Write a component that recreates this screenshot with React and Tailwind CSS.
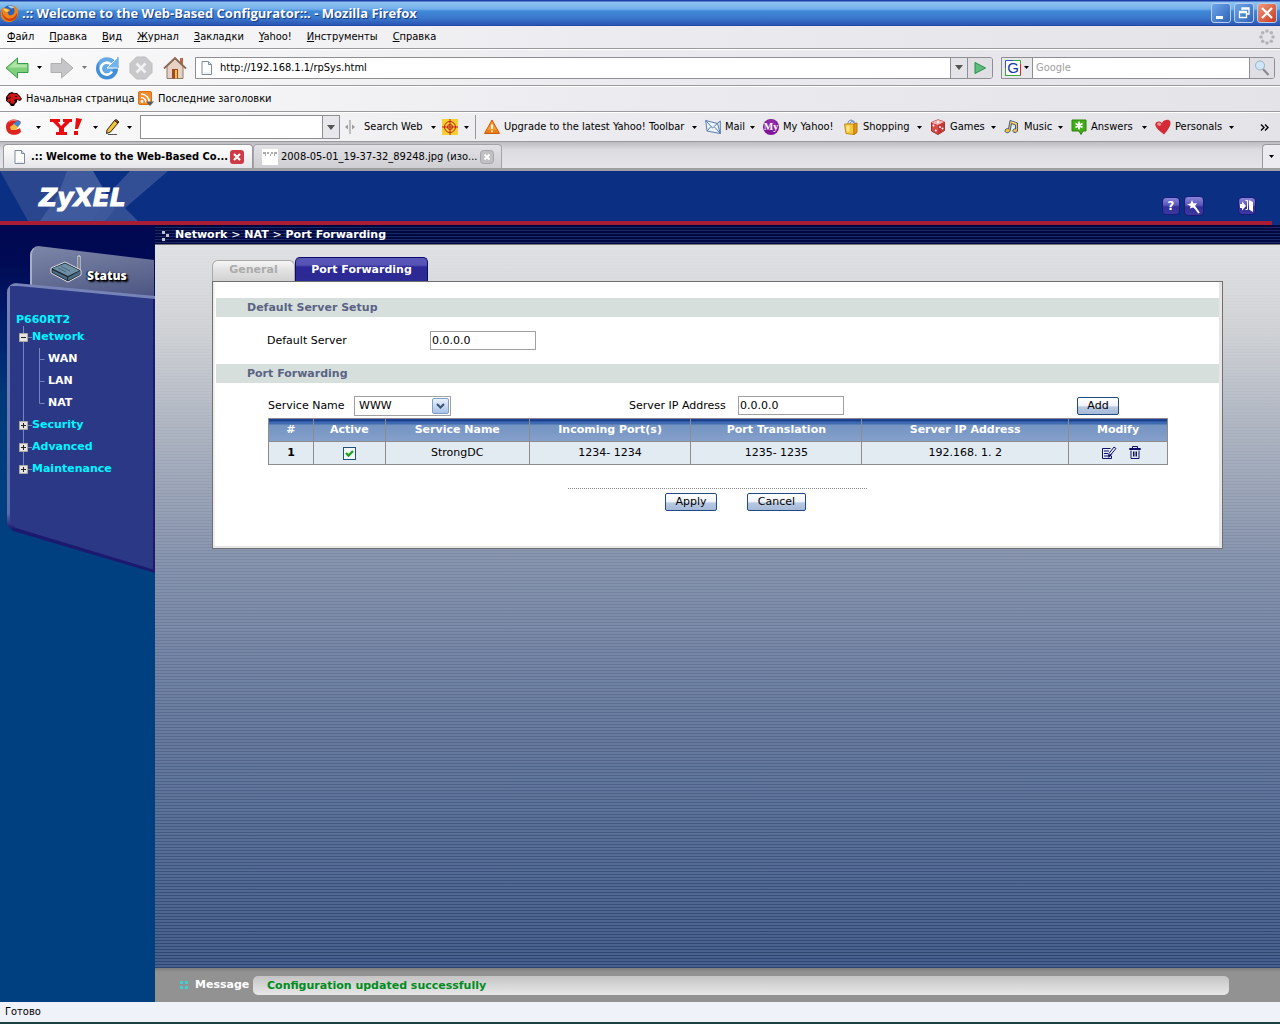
import { useState } from 'react'

const menuItems = ['Файл', 'Правка', 'Вид', 'Журнал', 'Закладки', 'Yahoo!', 'Инструменты', 'Справка']

const columns = [
  { title: '#', width: 'w-[5%]' },
  { title: 'Active', width: 'w-[8%]' },
  { title: 'Service Name', width: 'w-[16%]' },
  { title: 'Incoming Port(s)', width: 'w-[18%]' },
  { title: 'Port Translation', width: 'w-[19%]' },
  { title: 'Server IP Address', width: 'w-[23%]' },
  { title: 'Modify', width: 'w-[11%]' }
]

function Caret({ className = 'text-black' }) {
  return (
    <svg className={`w-[5px] h-[3px] shrink-0 ${className}`} viewBox="0 0 5 3" fill="currentColor" aria-hidden="true">
      <path d="M0 0h5L2.500 3z" />
    </svg>
  )
}

function Svg({ children, className = 'size-4', box = '0 0 16 16' }) {
  return (
    <svg className={`shrink-0 ${className}`} viewBox={box} fill="none" aria-hidden="true">
      {children}
    </svg>
  )
}

const FirefoxIcon = () => (
  <Svg className="size-[18px]">
    <circle cx="8" cy="8" r="7" fill="#2a62b8" />
    <path d="M6 2c3-1 6 0 7 2-2-1-3 0-4 0z" fill="#9fd0f5" />
    <path d="M1 3c1 1 3 1 4 1 2 0 3 1 3 2L6 7c0 2 1 3 3 3s3-2 3-4c0-2-1-4-2-5 4 1 6 4 5 8-1 4-4 7-8 7-5 0-8-4-7-9z" fill="#f08018" />
    <path d="M1 5c0 4 2 7 6 8 4 0 6-2 7-5 1 4-2 7-6 7S0 11 1 5z" fill="#c8400c" />
    <path d="M2 4c2 0 4 0 5 2L5 7 3 6z" fill="#ffd25a" />
  </Svg>
)

const PageIcon = () => (
  <Svg>
    <path d="M3 1.500h6.500l3 3v10H3z" fill="#fdfefe" stroke="#7f8a99" />
    <path d="M9.500 1.500v3h3" fill="#dde6ee" stroke="#7f8a99" />
    <path d="M5 13h6" stroke="#d8e2ea" />
  </Svg>
)

const WarnIcon = () => (
  <Svg>
    <path d="M8 1 15.500 14.500H.5z" fill="#f07c10" stroke="#c85a08" strokeLinejoin="round" />
    <path d="M8 2.500 3 11h10z" fill="#ffab45" opacity=".6" />
    <path d="M8 5.500v4.500M8 11.500v1.800" stroke="#fff" strokeWidth="1.800" />
  </Svg>
)

const MailIcon = () => (
  <Svg>
    <path d="M.7 1.500 12.500 4.500l2.800 10L2 12z" fill="#eaf4fd" stroke="#5a7cae" />
    <path d="M.7 1.500 7.500 9l7-6.500M2 12l4-4.500M15.300 14.500 9.500 8" stroke="#5a7cae" />
    <path d="M15.300 14.500V2l-3 2.500" stroke="#5a7cae" />
  </Svg>
)

const MyIcon = () => (
  <Svg>
    <circle cx="8" cy="8" r="8" fill="#7f169a" />
    <circle cx="8" cy="6" r="5.500" fill="#a53cc0" opacity=".5" />
    <text x="8" y="11" textAnchor="middle" fontSize="10" fontWeight="700" fill="#fff" fontFamily="'Liberation Serif', serif">My</text>
  </Svg>
)

const BagIcon = () => (
  <Svg>
    <path d="M5 5c0-5 5-5 5.500-1M7 5c1-4 5-4 5 0" stroke="#5a86b8" />
    <path d="M1.500 5h9.500v10.500l-8-1z" fill="#f8c63a" stroke="#c88810" />
    <path d="M11 5l3-1v9.500l-3 2z" fill="#e09a18" stroke="#b8780c" />
    <path d="M3.500 6.500h3v6h-3z" fill="#ffe68a" />
  </Svg>
)

const DiceIcon = () => (
  <Svg>
    <path d="M8 .8 14.500 3v8.500L8 15.500 1.500 12V3.500z" fill="#d84a4a" stroke="#933" />
    <path d="M8 .8 14.500 3 8 6 1.500 3.500z" fill="#f6b4b4" />
    <path d="M8 6l6.500-3v8.500L8 15.500z" fill="#c43636" />
    <circle cx="8" cy="3.300" r="1" fill="#fff" />
    <circle cx="3.500" cy="6.500" r="1" fill="#fff" />
    <circle cx="5.800" cy="11.500" r="1" fill="#fff" />
    <circle cx="10" cy="8" r="1" fill="#fff" />
    <circle cx="12.500" cy="9.500" r="1" fill="#fff" />
  </Svg>
)

const MusicIcon = () => (
  <Svg>
    <path d="M6 1.500 13.500 4v8c-1 2-4 2-4.500.5S10 9.500 11.500 10V6L7.500 4.500 6 12c-1 2.500-5 2-5 0s2-3 3.500-2z" fill="#f8c428" stroke="#3e5a94" strokeLinejoin="round" />
    <path d="M7.500 3 12 4.500" stroke="#ffe27a" />
  </Svg>
)

const AnswersIcon = () => (
  <Svg>
    <path d="M1 1h14v11h-3l-2 3.500L8 12H1z" fill="#3fae18" stroke="#2b8508" strokeLinejoin="round" />
    <path d="M8 2.500v8M4.500 4.500l7 4M11.500 4.500l-7 4" stroke="#fff" strokeWidth="1.800" />
  </Svg>
)

const HeartIcon = () => (
  <Svg>
    <path d="M9 15.500C4 12 0 8.500.3 5 .7 2 5 1.500 7 4c1.500-3 7-4.500 8.300-1.500C16.500 7 12 12 9 15.500z" fill="#d42c36" />
    <path d="M2 5c.5-2 3-2 4-.5S4 9 2 5z" fill="#f58a8e" />
  </Svg>
)

const yahooLinks = [
  { label: 'Upgrade to the latest Yahoo! Toolbar', Icon: WarnIcon, width: 'w-[221px]', caret: true },
  { label: 'Mail', Icon: MailIcon, width: 'w-[58px]', caret: true },
  { label: 'My Yahoo!', Icon: MyIcon, width: 'w-[80px]', caret: false },
  { label: 'Shopping', Icon: BagIcon, width: 'w-[87px]', caret: true },
  { label: 'Games', Icon: DiceIcon, width: 'w-[74px]', caret: true },
  { label: 'Music', Icon: MusicIcon, width: 'w-[67px]', caret: true },
  { label: 'Answers', Icon: AnswersIcon, width: 'w-[84px]', caret: true },
  { label: 'Personals', Icon: HeartIcon, width: 'w-[87px]', caret: true }
]

function TitleBar() {
  const btn = 'size-[20px] rounded-[3px] border border-[#b9cdf0] flex items-center justify-center'
  return (
    <header className="h-[26px] flex items-center pl-[1px] pr-[3px] bg-[linear-gradient(#1b3fa6_0px,#1b3fa6_1px,#8fc4f0_2px,#72b0ea_9px,#4188d8_11px,#3a78cc_18px,#2a55b4_25px,#1b3a98_26px)]">
      <FirefoxIcon />
      <h1 className="ml-[3px] flex-1 whitespace-nowrap font-['Open_Sans',sans-serif] font-bold text-[13px] leading-[16px] text-white [text-shadow:1px_1px_0_#1a3a80]">
        .:: Welcome to the Web-Based Configurator::. - Mozilla Firefox
      </h1>
      <div className="flex gap-[3px]">
        <button aria-label="Minimize" className={`${btn} bg-[linear-gradient(135deg,#6ea6e8,#2f62b8)]`}>
          <Svg className="size-[14px]" box="0 0 14 14"><path d="M2 10h7v3H2z" fill="#fff" /></Svg>
        </button>
        <button aria-label="Restore" className={`${btn} bg-[linear-gradient(135deg,#6ea6e8,#2f62b8)]`}>
          <Svg className="size-[14px]" box="0 0 14 14"><path d="M5 4V2h7v6h-2M5 3h7M2.500 5.500h7v6h-7zM2 6.500h8" stroke="#fff" strokeWidth="1.300" /></Svg>
        </button>
        <button aria-label="Close" className={`${btn} bg-[linear-gradient(135deg,#f09a80,#c83a1c)]`}>
          <Svg className="size-[14px]" box="0 0 14 14"><path d="m2 2 10 10M12 2 2 12" stroke="#fff" strokeWidth="2.200" /></Svg>
        </button>
      </div>
    </header>
  )
}

function MenuBar() {
  return (
    <nav className="h-[23px] flex items-center pl-[7px] pr-[5px] border-b border-[#9a9a9e]">
      <ul className="flex gap-[15px] flex-1">
        {menuItems.map((item) => (
          <li key={item}>
            <button><span className="underline">{item[0]}</span>{item.slice(1)}</button>
          </li>
        ))}
      </ul>
      <svg className="size-[16px] text-[#b4b4b8]" viewBox="0 0 16 16" fill="currentColor" aria-hidden="true">
        <circle cx="8" cy="2" r="1.800" /><circle cx="12.300" cy="3.700" r="1.800" /><circle cx="14" cy="8" r="1.800" /><circle cx="12.300" cy="12.300" r="1.800" />
        <circle cx="8" cy="14" r="1.800" /><circle cx="3.700" cy="12.300" r="1.800" /><circle cx="2" cy="8" r="1.800" /><circle cx="3.700" cy="3.700" r="1.800" />
      </svg>
    </nav>
  )
}

function NavBar() {
  const [url, setUrl] = useState('http://192.168.1.1/rpSys.html')
  const [query, setQuery] = useState('')
  return (
    <div className="h-[37px] flex items-center pl-[5px] pr-[5px] border-t border-t-white border-b border-b-[#9a9a9e]">
      <button aria-label="Back" className="flex items-center w-[45px]">
        <Svg className="size-[24px]" box="0 0 24 24">
          <path d="M1 12 12.500 2v5.500H23v9H12.500V22z" fill="#7fd07a" stroke="#3b9a50" strokeLinejoin="round" />
          <path d="M3.500 11.500 11.500 4.500v4H22v3z" fill="#c4efb8" opacity=".7" />
        </Svg>
        <span className="ml-[8px]"><Caret /></span>
      </button>
      <button aria-label="Forward" className="flex items-center w-[44px]">
        <Svg className="size-[24px]" box="0 0 24 24">
          <path d="M23 12 11.500 2v5.500H1v9h10.500V22z" fill="#c6c6c8" stroke="#b0b0b3" strokeLinejoin="round" />
        </Svg>
        <span className="ml-[8px]"><Caret className="text-[#777]" /></span>
      </button>
      <button aria-label="Reload" className="w-[35px] pl-[1px]">
        <Svg className="size-[24px]" box="0 0 24 24">
          <circle cx="12" cy="12.500" r="11" fill="#3f8fd8" />
          <circle cx="11.500" cy="9" r="8" fill="#7fbdf0" opacity=".6" />
          <path d="M17 15.500A6 6 0 1 1 15.500 8" stroke="#fff" strokeWidth="2.600" />
          <path d="M12 12h11V1z" fill="#6fb4ec" stroke="#fff" />
          <path d="M23 12V1" stroke="#3f8fd8" />
        </Svg>
      </button>
      <button aria-label="Stop" className="w-[34px]">
        <Svg className="size-[24px]" box="0 0 24 24">
          <path d="M7.500 1h9L23 7.500v9L16.500 23h-9L1 16.500v-9z" fill="#c9c9cb" stroke="#bcbcbf" strokeLinejoin="round" />
          <path d="m7.500 7.500 9 9M16.500 7.500l-9 9" stroke="#f2f2f4" strokeWidth="2.600" />
        </Svg>
      </button>
      <button aria-label="Home" className="w-[32px]">
        <Svg className="size-[24px]" box="0 0 24 24">
          <path d="M17 2h3v7h-3z" fill="#b56a4c" />
          <path d="M4 10 12 3l8 7v12.500H4z" fill="#e6d2c2" stroke="#8f7a6c" />
          <path d="M1 12.500 12 2l11 10.500" stroke="#8c6a58" strokeWidth="1.800" />
          <path d="M9 13h6v9.500H9z" fill="#a8452c" />
          <path d="M12 14h2v8.500h-2z" fill="#e8c83c" />
        </Svg>
      </button>
      <div className="flex flex-1 h-[22px] border border-[#8e8e93] rounded-r-[3px] bg-white overflow-hidden">
        <div className="w-[22px] flex items-center justify-center"><PageIcon /></div>
        <input aria-label="Address" value={url} onChange={(e) => setUrl(e.target.value)} className="flex-1 min-w-0 pl-[2px] outline-none" />
        <button aria-label="History" className="w-[17px] border-l border-[#8e8e93] bg-[#e4e3e8] flex items-center justify-center">
          <svg className="w-[8px] h-[5px]" viewBox="0 0 8 5" aria-hidden="true"><path d="M0 0h8L4 5z" fill="#555" /></svg>
        </button>
        <button aria-label="Go" className="w-[25px] border-l border-[#8e8e93] bg-[#e0dfe4] flex items-center justify-center">
          <svg className="size-[12px]" viewBox="0 0 12 12" aria-hidden="true"><path d="M1 .5 11.500 6 1 11.500z" fill="#5cbf7c" stroke="#2a8a4c" /></svg>
        </button>
      </div>
      <div className="ml-[8px] flex w-[274px] h-[22px] border border-[#8e8e93] rounded-r-[3px] bg-white overflow-hidden">
        <button aria-label="Search engine" className="w-[31px] shrink-0 pl-[3px] flex items-center gap-[3px] bg-[#e8e7ec] border-r border-[#8e8e93]">
          <Svg>
            <path d="M1 1h14v14H1z" fill="#fff" />
            <path d="M.5 15.500V.5H8" stroke="#2a56d0" />
            <path d="M8 .5h7.500V4M.5 8v7.500h15" stroke="#38a838" />
            <path d="M15.500 4v11.500" stroke="#d82828" />
            <text x="8" y="13" textAnchor="middle" fontSize="15" fill="#1434a8" fontFamily="'Liberation Sans', sans-serif">G</text>
          </Svg>
          <Caret />
        </button>
        <input aria-label="Search" placeholder="Google" value={query} onChange={(e) => setQuery(e.target.value)} className="flex-1 min-w-0 pl-[3px] outline-none placeholder:text-[#a0a0a0]" />
        <button aria-label="Start search" className="w-[25px] shrink-0 border-l border-[#8e8e93] bg-[#e0dfe4] flex items-center justify-center">
          <Svg>
            <path d="m9 9 5.500 6" stroke="#8a8a90" strokeWidth="2.200" />
            <circle cx="6" cy="5.500" r="4.500" fill="#cfe6f8" stroke="#9ab0c0" />
          </Svg>
        </button>
      </div>
    </div>
  )
}

function BookmarksBar() {
  return (
    <div className="h-[26px] flex items-center pl-[6px] border-t border-t-white border-b border-b-[#9a9a9e]">
      <a href="#start" className="flex items-center gap-[4px] w-[132px] whitespace-nowrap">
        <Svg>
          <path d="M0 6 3 2l3-1 2 1h3l3 3 2 3-2 2-3-1v2l-2 2-1 2H5l-2-3-3-2z" fill="#180404" />
          <path d="M1 6l3-3 3-.5L11 3l3 3 1 2-2 1-3-1-2 1 1 2-2 2-3-1 1-2-3 1-1-2 2-2z" fill="#d01818" />
          <path d="M9 5h2v1H9zM4 5l1 2-2 1zM7 8l-1 2z" fill="#200" />
        </Svg>
        Начальная страница
      </a>
      <button className="flex items-center gap-[4px] whitespace-nowrap">
        <Svg>
          <rect x=".5" y=".5" width="13" height="13" rx="1.500" fill="#f08a2c" stroke="#d8701c" />
          <path d="M3 6.500a5 5 0 0 1 5 5M3 3a8.500 8.500 0 0 1 8.500 8.500" stroke="#fff" strokeWidth="1.600" />
          <circle cx="4" cy="10.500" r="1.400" fill="#fff" />
          <path d="M8 10.500h8L12 15z" fill="#5c5c60" />
        </Svg>
        Последние заголовки
      </button>
    </div>
  )
}

function YahooBar() {
  return (
    <div className="h-[30px] flex items-center pl-[6px] pr-[11px] border-t border-t-white border-b border-b-[#9a9a9e]">
      <button aria-label="CCleaner" className="w-[44px] flex items-center justify-between pr-[9px]">
        <Svg>
          <path d="M15 3C11-1 0-.5 0 8s10 10 15 5l-1-4c-2 2-6 2-7-1s2-4 6-3z" fill="#dc2420" />
          <path d="M3 3c2-2 6-2 8-1" stroke="#f4827c" />
          <path d="M7 5 12 1l3 3-3 4H8z" fill="#3f86d0" />
          <path d="M4 8l4-3 4 3-2 3H5z" fill="#f2b840" />
        </Svg>
        <Caret />
      </button>
      <button aria-label="Yahoo!" className="w-[55px] flex items-center justify-between pr-[7px]">
        <Svg className="w-[32px] h-[18px]" box="0 0 32 18">
          <path d="M0 1h10v3H8l3 4 4-4h-2V1h9v3h-2l-6 6v4h3v3H6v-3h3v-4L3 4H0z" fill="#e80c10" />
          <path d="m26 0 6 1-4 10h-3zM24 13h4v4h-4z" fill="#e80c10" />
        </Svg>
        <Caret />
      </button>
      <button aria-label="Highlight" className="w-[35px] flex items-center justify-between pr-[8px]">
        <Svg>
          <path d="m2 11 7.500-9.500L13 4l-7.500 9-4 1.500z" fill="#f7c437" stroke="#2a2418" />
          <path d="m9.500 1.500 1.500-1L14 3l-1 1z" fill="#e04838" stroke="#2a2418" />
          <path d="M3 15.500h9" stroke="#555" />
        </Svg>
        <Caret />
      </button>
      <div className="flex w-[200px] h-[24px] border border-[#8e8e93] bg-white">
        <input aria-label="Yahoo search" className="flex-1 min-w-0 px-1 outline-none" />
        <button aria-label="Search history" className="w-[17px] border-l border-[#8e8e93] bg-[#e8e7eb] flex items-center justify-center">
          <svg className="w-[8px] h-[5px]" viewBox="0 0 8 5" aria-hidden="true"><path d="M0 0h8L4 5z" fill="#555" /></svg>
        </button>
      </div>
      <Svg className="w-[10px] h-[14px] ml-[5px]" box="0 0 10 14">
        <path d="M5 0v14" stroke="#8a8a8e" />
        <path d="M0 7l3-2.500v5zM10 7 7 4.500v5z" fill="#9a9a9e" />
      </Svg>
      <button className="ml-[9px] w-[78px] flex items-center justify-between pr-[6px] whitespace-nowrap">Search Web<Caret /></button>
      <button aria-label="Anti-Spy" className="w-[33px] flex items-center gap-[6px]">
        <Svg>
          <path d="M0 0h16v16H0z" fill="#f8cf30" />
          <circle cx="8" cy="8" r="5.500" stroke="#c02020" /><circle cx="8" cy="8" r="2.500" stroke="#c02020" />
          <path d="M8 0v16M0 8h16" stroke="#c02020" />
        </Svg>
        <Caret />
      </button>
      <div className="h-[24px] w-[1px] bg-[#9a9a9e] mr-[8px]" />
      {yahooLinks.map(({ label, Icon, width, caret }) => (
        <button key={label} className={`flex items-center shrink-0 whitespace-nowrap pr-[8px] ${width}`}>
          <Icon />
          <span className="ml-[4px] mr-auto">{label}</span>
          {caret && <Caret />}
        </button>
      ))}
      <button aria-label="More" className="ml-auto">
        <Svg className="w-[9px] h-[7px]" box="0 0 9 7"><path d="m1 .5 3 3-3 3M5 .5l3 3-3 3" stroke="#000" strokeWidth="1.400" /></Svg>
      </button>
    </div>
  )
}

function TabBar() {
  return (
    <div className="h-[29px] shrink-0 flex items-end pl-[3px] bg-[linear-gradient(#bdbcc0,#dddce1_8px,#e4e3e8)] border-b-[3px] border-[#a0a0a4]">
      <button className="h-[24px] w-[250px] pl-[8px] pr-[8px] flex items-center rounded-t-[4px] border border-b-0 border-[#9a9a9e] bg-[linear-gradient(#ffffff,#e6e6ea)] font-bold whitespace-nowrap">
        <PageIcon />
        <span className="ml-[3px] mr-auto">.:: Welcome to the Web-Based Co...</span>
        <Svg className="size-[14px]" box="0 0 14 14">
          <rect width="14" height="14" rx="3" fill="#cf3a46" />
          <path d="m4 4 6 6M10 4l-6 6" stroke="#fff" strokeWidth="2.200" />
        </Svg>
      </button>
      <button className="h-[24px] w-[249px] pl-[8px] pr-[7px] flex items-center rounded-t-[4px] border border-b-0 border-[#a4a4a8] bg-[linear-gradient(#e2e1e5,#cfced3)] whitespace-nowrap">
        <Svg>
          <path d="M0 0h16v16H0z" fill="#fff" />
          <path d="M1 4h3M5 4h2M9 4h2M12 4h3M3 6h1M8 6h1M12 6h1" stroke="#555" />
        </Svg>
        <span className="ml-[3px] mr-auto">2008-05-01_19-37-32_89248.jpg (изо...</span>
        <Svg className="size-[14px]" box="0 0 14 14">
          <rect x=".5" y=".5" width="13" height="13" rx="3" fill="#c0bfc3" stroke="#a6a6aa" />
          <path d="m4.500 4.500 5 5M9.500 4.500l-5 5" stroke="#fff" strokeWidth="2" />
        </Svg>
      </button>
      <button aria-label="List all tabs" className="ml-auto h-[24px] w-[18px] flex items-center justify-center rounded-tl-[4px] border border-b-0 border-r-0 border-[#9a9a9e] bg-[#ececf0]">
        <Caret />
      </button>
    </div>
  )
}

function Banner() {
  const btn = 'rounded-[4px] border border-[#1a1a78] bg-[linear-gradient(#8a86dc,#5a56b8_45%,#34309c_55%,#3c389e)] flex items-center justify-center'
  return (
    <div className="relative bg-[#0b2f83]">
      <svg className="absolute left-0 top-0 w-[170px] h-[50px]" viewBox="0 0 170 50" aria-hidden="true">
        <path d="M0 0h93l22 38-10 12H28z" fill="#29468f" />
        <path d="M67 0h26l22 38-10 12H40l18-26z" fill="#405b9d" />
        <path d="M130 0h38l-43 37 13 13H92l23-34z" fill="#3c579b" opacity=".8" />
      </svg>
      <div className="relative h-[50px] flex items-center pl-[39px] pr-[24px]">
        <span className="flex-1 pt-[3px] font-['DejaVu_Sans',sans-serif] font-bold italic text-[25px] leading-[30px] text-white [-webkit-text-stroke:1px_#fff]">ZyXEL</span>
        <div className="flex items-center pt-[19px]">
          <button aria-label="Help" className={`${btn} size-[18px] text-white font-bold text-[13px]`}>?</button>
          <button aria-label="Wizard" className={`${btn} ml-[4px] size-[20px]`}>
            <Svg>
              <path d="m6 2 1.500 3.500 3.500-.5-2 3 1 3.500L7 9.500l-3 1L4.500 8 1 6.500l3.500-1z" fill="#fff" />
              <path d="m8 8 5 7" stroke="#fff" strokeWidth="2" />
            </Svg>
          </button>
          <button aria-label="Logout" className={`${btn} ml-[34px] size-[18px]`}>
            <Svg className="size-[14px]" box="0 0 14 14">
              <path d="M0 5h2V2.500L6 7l-4 4.500V9H0z" fill="#fff" />
              <path d="M5.500 1.500h2v9h-2" stroke="#fff" /><path d="m9 1 4 2v10l-4-2.500z" fill="#fff" />
            </Svg>
          </button>
        </div>
      </div>
      <div className="h-[4px] mr-[8px] bg-[#a81c34]" />
    </div>
  )
}

function TreeNode({ label, open, children }) {
  return (
    <li>
      <a href={`#${label.toLowerCase()}`} className="h-[22px] flex items-center font-bold text-[#00f6ff]">
        <svg className="w-[13px] h-[22px] shrink-0" viewBox="0 0 13 22" aria-hidden="true">
          <path d={label === 'Maintenance' ? 'M4.500 0v7' : 'M4.500 0v22'} stroke="#7686bb" />
          <path d="M9 11.500h4" stroke="#7686bb" />
          <path d="M.5 7.500h8v8h-8z" fill="#e6e4dc" stroke="#a8a8a8" />
          <path d={open ? 'M2 11.500h5' : 'M2 11.500h5M4.500 9v5'} stroke="#222" />
        </svg>
        {label}
      </a>
      {children}
    </li>
  )
}

function Sidebar() {
  return (
    <aside className="w-[155px] shrink-0 bg-[linear-gradient(#000850_0px,#000b55_40px,#001f6c_100px,#003878_170px,#003f80_260px)] pt-[21px] font-['DejaVu_Sans',sans-serif]">
      <a href="#status" className="ml-[30px] mr-[1px] h-[50px] block rounded-tl-[9px] border-l-2 border-[#a7aec6] bg-[linear-gradient(170deg,#7c86a8,#656f95_50%,#4c5582)] [clip-path:polygon(0_0,8px_0,100%_14px,100%_100%,0_100%)]">
        <span className="flex items-end h-full pl-[18px] pb-[13px] gap-[3px] text-white">
          <Svg className="w-[34px] h-[28px]" box="0 0 34 28">
            <path d="M28 16V1h2v17" fill="#222" stroke="#e8ecf2" />
            <path d="M1 13 15 7l16 8v5l-13 7L1 18z" fill="#1c2630" stroke="#dfe5ec" />
            <path d="m2.500 13.500 12.500-5 14.500 7L18 21z" fill="#6f8fa6" />
            <path d="M18 22.500 30 16v3.500L18 25.500zM2.500 15 17 22v3L2.500 17.500z" fill="#4c6a82" />
            <path d="m8 13 8 4M11 11.500l9 4.500" stroke="#4a667c" />
          </Svg>
          <span className="font-['Open_Sans',sans-serif] font-extrabold text-[12px] leading-[14px] [text-shadow:1px_1px_1px_#000,-1px_0_1px_#000,2px_2px_2px_#000]">Status</span>
        </span>
      </a>
      <div className="relative -mt-[13px] ml-[7px] bg-[linear-gradient(#7784b8,#5f6cab_calc(100%-60px),#1c1a70_calc(100%-44px))] rounded-l-[9px] [clip-path:polygon(0_0,8px_0,100%_13px,100%_100%,6px_calc(100%-42px),0_calc(100%-48px))]">
        <div className="ml-[3px] bg-[#2b3885] border-r-2 border-[#1c1a70] rounded-bl-[9px] [clip-path:polygon(0_3px,8px_3px,100%_16px,100%_calc(100%-3px),6px_calc(100%-45px),0_calc(100%-51px))]">
          <nav className="pt-[29px] pl-[6px] pb-[93px]">
            <h2 className="font-bold text-[#00f6ff] leading-[16px]">P660RT2</h2>
            <ul className="pl-[3px] -mt-[2px]">
              <TreeNode label="Network" open>
                <ul className="ml-[5px]">
                  {['WAN', 'LAN', 'NAT'].map((name) => (
                    <li key={name}>
                      <a href={`#${name.toLowerCase()}`} className="h-[22px] flex items-center font-bold text-white">
                        <svg className="w-[24px] h-[22px] shrink-0 overflow-visible" viewBox="0 0 24 22" aria-hidden="true">
                          <path d="M-.5 0v22" stroke="#7686bb" />
                          <path d={name === 'NAT' ? 'M15.500 0v11.500h5' : 'M15.500 0v22M15.500 11.500h5'} fill="none" stroke="#7686bb" />
                        </svg>
                        {name}
                      </a>
                    </li>
                  ))}
                </ul>
              </TreeNode>
              <TreeNode label="Security" />
              <TreeNode label="Advanced" />
              <TreeNode label="Maintenance" />
            </ul>
          </nav>
        </div>
      </div>
    </aside>
  )
}

function SectionTitle({ children }) {
  return <h2 className="h-[19px] leading-[19px] pl-[31px] bg-[#d7dfdd] text-[#5a6384] font-bold">{children}</h2>
}

const xpButton = 'h-[18px] leading-[16px] rounded-[2px] border border-[#1f4a86] bg-[linear-gradient(#ffffff,#eef2f8_50%,#b9c9e2_55%,#a5b9d8)]'
const field = 'w-[106px] h-[19px] border border-[#a0a0a0] px-[1px] bg-white outline-none'

function PortForwarding() {
  const [active, setActive] = useState(true)
  const [defaultServer, setDefaultServer] = useState('0.0.0.0')
  const [serverIp, setServerIp] = useState('0.0.0.0')
  const cell = 'border border-[#8c8c8c]'

  return (
    <div className="mx-[57px] pt-[12px]">
      <div className="flex items-end" role="tablist">
        <button role="tab" aria-selected="false" className="w-[83px] h-[21px] pb-[3px] rounded-t-[6px] border border-b-0 border-[#a9a9a9] bg-[linear-gradient(#f6f6f6,#e4e4e4_40%,#d2d2d2)] text-[#ababab] font-bold">General</button>
        <button role="tab" aria-selected="true" className="w-[133px] h-[24px] rounded-t-[5px] border border-b-0 border-[#0b0870] bg-[linear-gradient(#5a58b8,#5552b4_7px,#2c2896_9px,#2c2a94)] text-white font-bold">Port Forwarding</button>
      </div>
      <form onSubmit={(e) => e.preventDefault()} className="border border-[#707070] bg-white shadow-[inset_-3px_-2px_0_#e6e6e6,inset_2px_0_0_#eeeeee] pl-[3px] pr-[3px] pt-[16px] pb-[37px]">
        <SectionTitle>Default Server Setup</SectionTitle>
        <div className="h-[47px] flex items-center pl-[51px]">
          <label htmlFor="default-server" className="w-[163px]">Default Server</label>
          <input id="default-server" value={defaultServer} onChange={(e) => setDefaultServer(e.target.value)} className={field} />
        </div>
        <SectionTitle>Port Forwarding</SectionTitle>
        <div className="pl-[52px] pr-[51px]">
          <div className="h-[35px] pt-[10px] flex items-center pr-[49px]">
            <div className="flex items-center w-[361px]">
              <label htmlFor="service" className="w-[86px] whitespace-nowrap">Service Name</label>
              <div className="relative w-[97px] h-[20px]">
                <select id="service" defaultValue="WWW" className="appearance-none w-full h-full pl-[4px] border border-[#a0a0a0] bg-white">
                  <option>WWW</option>
                  <option>FTP</option>
                  <option>Telnet</option>
                </select>
                <span className="pointer-events-none absolute right-[2px] top-[2px] w-[17px] h-[16px] rounded-[2px] border border-[#7f9fc8] bg-[linear-gradient(#e8f0fc,#a9c2e8)] flex items-center justify-center">
                  <svg className="w-[9px] h-[6px]" viewBox="0 0 9 6" fill="none" aria-hidden="true"><path d="m1 1 3.500 3.500L8 1" stroke="#3c5470" strokeWidth="2" /></svg>
                </span>
              </div>
            </div>
            <label htmlFor="server-ip" className="w-[109px] whitespace-nowrap">Server IP Address</label>
            <input id="server-ip" value={serverIp} onChange={(e) => setServerIp(e.target.value)} className={field} />
            <button className={`${xpButton} ml-auto w-[42px]`}>Add</button>
          </div>
          <table className="w-full table-fixed border-collapse border border-[#8c8c8c] text-center">
            <thead>
              <tr className="h-[23px] bg-[linear-gradient(#1a3f94_0px,#1a3f94_2px,#3f6cb0_3px,#3f6cb0_5px,#7494c2_6px,#86a0cb_100%)] text-white">
                {columns.map((col) => (
                  <th key={col.title} scope="col" className={`${cell} ${col.width} font-bold`}>{col.title}</th>
                ))}
              </tr>
            </thead>
            <tbody>
              <tr className="h-[23px] bg-[#e2eaf2]">
                <th scope="row" className={`${cell} font-bold`}>1</th>
                <td className={cell}>
                  <span className="relative block mx-auto size-[13px]">
                    <input type="checkbox" aria-label="Active" checked={active} onChange={() => setActive(!active)} className="appearance-none block size-[13px] border border-[#1c5180] bg-[#f4f8f6]" />
                    {active && (
                      <svg className="pointer-events-none absolute inset-0 size-[13px]" viewBox="0 0 13 13" fill="none" aria-hidden="true">
                        <path d="m3 6 2.500 2.500L10 4" stroke="#21a121" strokeWidth="2.400" />
                      </svg>
                    )}
                  </span>
                </td>
                <td className={cell}>StrongDC</td>
                <td className={cell}>1234- 1234</td>
                <td className={cell}>1235- 1235</td>
                <td className={cell}>192.168. 1. 2</td>
                <td className={cell}>
                  <div className="flex items-center justify-center gap-[10px] pl-[7px]">
                    <button aria-label="Edit">
                      <Svg className="size-[16px] text-[#10106a]">
                        <path d="M9.500 3.500h-8v10h9V11M3 6h5M3 8.500h4M3 11h4" stroke="currentColor" />
                        <path d="m7.500 11.500.5-3 5-6.500L15 3.500 9.500 10z" fill="#e2eaf2" stroke="currentColor" />
                        <path d="M7.500 9.500h4L7.500 13z" fill="currentColor" />
                      </Svg>
                    </button>
                    <button aria-label="Delete">
                      <Svg className="size-[16px] text-[#10106a]">
                        <path d="M5.500 3V1.500h5V3M2.500 3.500h11v1h-11zM4 5.500v8h8v-8M6.500 6.500v5M8 6.500v5M9.500 6.500v5" stroke="currentColor" />
                      </Svg>
                    </button>
                  </div>
                </td>
              </tr>
            </tbody>
          </table>
        </div>
        <div className="w-[299px] mx-auto mt-[23px] border-t border-dotted border-[#8a8a8a]" />
        <div className="flex justify-center gap-[30px] mt-[4px] pl-[36px]">
          <button className={`${xpButton} w-[52px]`}>Apply</button>
          <button className={`${xpButton} w-[59px]`}>Cancel</button>
        </div>
      </form>
    </div>
  )
}

export default function App() {
  return (
    <div className="min-h-screen flex flex-col text-[11px] leading-[14px] text-black font-['DejaVu_Sans_Condensed','DejaVu_Sans',sans-serif]">
      <TitleBar />
      <div className="bg-[linear-gradient(to_right,#fafafa,#ecebef_45%,#e4e3e8)]">
        <MenuBar />
        <NavBar />
        <BookmarksBar />
        <YahooBar />
      </div>
      <TabBar />
      <Banner />
      <div className="flex-1 flex">
        <Sidebar />
        <div className="flex-1 min-w-0 flex flex-col font-['DejaVu_Sans',sans-serif]">
          <div className="h-[20px] flex items-center gap-[5px] pl-[7px] text-white font-bold border-b border-[#777] bg-[repeating-linear-gradient(#00093f_0px,#00093f_2px,#1a2a66_2px,#1a2a66_3px)]">
            <svg className="w-[8px] h-[10px] mt-[2px]" viewBox="0 0 8 10" fill="#c0c4cc" aria-hidden="true"><path d="M0 0h3v3H0zM4 3h3v3H4zM0 7h3v3H0z" /></svg>
            <p>Network <span className="font-normal">&gt;</span> NAT <span className="font-normal">&gt;</span> Port Forwarding</p>
          </div>
          {/* the fade on top lets the scan lines show more towards the bottom */}
          <main className="flex-1 bg-[linear-gradient(#e8e8e8f2_0%,#dfdfdee6_12%,#c4c7cdcc_27%,#b4b9c699_43%,#aeb4c559_65%,#b0b4c400_100%),repeating-linear-gradient(#45608c_0px,#45608c_2px,#2d4470_2px,#2d4470_3px)]">
            <PortForwarding />
          </main>
          <footer className="h-[34px] flex items-center pl-[25px] pr-[51px] bg-[linear-gradient(#7c7c7c,#929292_4px)] text-white font-bold">
            <svg className="size-[8px]" viewBox="0 0 8 8" fill="#3fd0d0" aria-hidden="true"><path d="M0 0h3v3H0zM5 0h3v3H5zM0 5h3v3H0zM5 5h3v3H5z" /></svg>
            <span className="ml-[7px] w-[58px]">Message</span>
            <p role="status" className="flex-1 h-[19px] leading-[19px] pl-[14px] rounded-[5px] bg-[linear-gradient(#c4c4c4,#e8e8e8)] text-[#008c20]">Configuration updated successfully</p>
          </footer>
        </div>
      </div>
      <div className="h-[22px] shrink-0 flex items-center pl-[5px] bg-[#eff2f8] border-b-2 border-[#1c4040]">Готово</div>
    </div>
  )
}
